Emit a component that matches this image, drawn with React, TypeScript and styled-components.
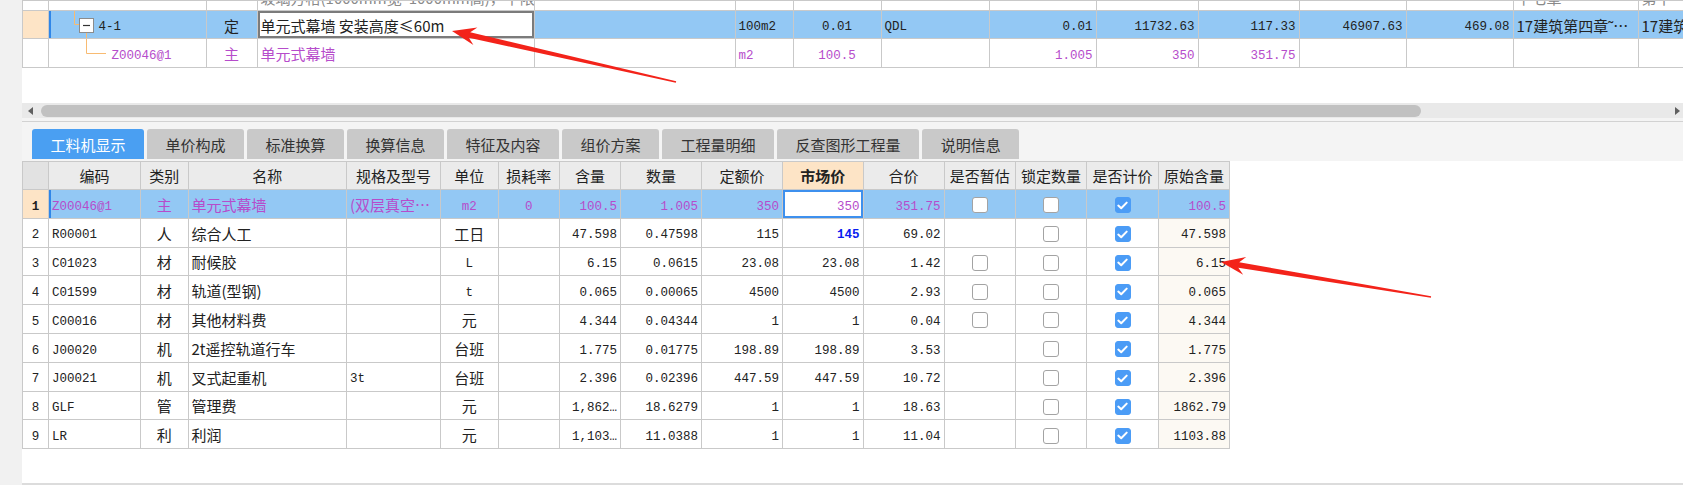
import React from 'react';
import styled, { createGlobalStyle } from 'styled-components';

const PURPLE = '#b64ccb';
const LINE = '#c9c9c9';
const SELECTED = '#93c8f4';
const PEACH = '#fde4c6';
const ORANGE = '#f8bb72';

const GlobalStyle = createGlobalStyle`
  html, body {
    margin: 0;
    padding: 0;
    background: #fff;
  }
  body {
    width: 1683px;
    height: 485px;
    overflow: hidden;
    font-family: "Noto Sans CJK SC", "Liberation Sans", sans-serif;
    color: #222;
  }
`;

const Page = styled.div`
  position: relative;
  display: flex;
  width: 1683px;
  height: 485px;
  overflow: hidden;
`;

const LeftStrip = styled.div`
  flex: none;
  width: 22px;
  background: #f1f1f1;
`;

const Main = styled.div`
  flex: 1;
  min-width: 0;
  display: flex;
  flex-direction: column;
  background: #f4f4f4;
`;

const TopPane = styled.div`
  height: 103px;
  background: #fff;
  overflow: hidden;
`;

const Grid = styled.table`
  border-collapse: collapse;
  table-layout: fixed;
`;

const Row = styled.tr<{ $h: number; $bg?: string }>`
  height: ${p => p.$h}px;
  background: ${p => p.$bg || 'transparent'};
`;

const Cell = styled.td<{
  $align?: string;
  $bg?: string;
  $color?: string;
  $bold?: boolean;
  $edit?: 'gray' | 'blue';
  $mark?: boolean;
}>`
  position: relative;
  border: 1px solid ${LINE};
  padding: 0 3px;
  white-space: nowrap;
  overflow: hidden;
  vertical-align: middle;
  line-height: 1;
  text-align: ${p => p.$align || 'left'};
  background: ${p => p.$bg || 'transparent'};
  color: ${p => p.$color || '#222'};
  font-weight: ${p => (p.$bold ? 700 : 400)};
  box-shadow: ${p =>
    p.$edit === 'gray'
      ? 'inset 0 0 0 2px #7b7b7b'
      : p.$edit === 'blue'
      ? 'inset 0 0 0 2px #3d90ee'
      : p.$mark
      ? `inset 2px 0 0 #2f86e8`
      : 'none'};
`;

const HeadCell = styled.th<{ $bg?: string; $bold?: boolean }>`
  border: 1px solid ${LINE};
  padding: 0;
  font-size: 15px;
  font-weight: ${p => (p.$bold ? 700 : 400)};
  color: #222;
  line-height: 1;
  text-align: center;
  white-space: nowrap;
  overflow: hidden;
  background: ${p => p.$bg || '#ebebeb'};
`;

const Txt = styled.span<{ $cjk?: boolean }>`
  font-family: ${p =>
    p.$cjk ? '"Noto Sans CJK SC", sans-serif' : '"Liberation Mono", "Noto Sans CJK SC", monospace'};
  font-size: ${p => (p.$cjk ? '15px' : '12.5px')};
`;

const GhostText = styled.div`
  margin-top: -16px;
  color: #8a8a8a;
  font-size: 15px;
  line-height: 20px;
`;

const Tree = styled.svg`
  position: absolute;
  left: 0;
  overflow: visible;
  pointer-events: none;
`;

const ScrollBar = styled.div`
  height: 15px;
  flex: none;
  display: flex;
  align-items: center;
  background: #e9e9e9;
  position: relative;
`;

const ArrowLeft = styled.span`
  width: 0;
  height: 0;
  margin-left: 6px;
  border-top: 4px solid transparent;
  border-bottom: 4px solid transparent;
  border-right: 5px solid #606060;
`;

const Thumb = styled.div`
  margin-left: 8px;
  width: 1380px;
  height: 12px;
  border-radius: 6px;
  background: #c1c1c1;
`;

const ArrowRight = styled.span`
  margin-left: auto;
  margin-right: 3px;
  width: 0;
  height: 0;
  border-top: 4px solid transparent;
  border-bottom: 4px solid transparent;
  border-left: 5px solid #606060;
`;

const TabBar = styled.div`
  flex: none;
  display: flex;
  gap: 3px;
  margin-top: 3px;
  border-top: 1px solid #d2d2d2;
  padding: 7px 0 2px 10px;
  background: #f4f4f4;
`;

const Tab = styled.div<{ $active?: boolean }>`
  height: 30px;
  padding: 0 18.5px;
  display: flex;
  align-items: center;
  border-radius: 3px 3px 0 0;
  font-size: 15px;
  background: ${p => (p.$active ? '#4a9ff2' : '#c9c9c9')};
  color: ${p => (p.$active ? '#fff' : '#333')};
`;

const LowerPane = styled.div`
  flex: 1;
  background: #fff;
  border-bottom: 2px solid #dcdcdc;
`;

const Box = styled.span<{ $checked?: boolean }>`
  display: inline-flex;
  align-items: center;
  justify-content: center;
  width: 16px;
  height: 16px;
  box-sizing: border-box;
  border-radius: 3px;
  vertical-align: middle;
  border: 1.5px solid ${p => (p.$checked ? '#4b9cf6' : '#a3a3a3')};
  background: ${p => (p.$checked ? '#4b9cf6' : '#fff')};
`;

const Overlay = styled.svg`
  position: absolute;
  left: 0;
  top: 0;
  pointer-events: none;
`;

const isCjk = (s: string) => /[\u3000-\u9fff\uff00-\uffef]/.test(s);

function T({ v }: { v: string }) {
  if (!v) return null;
  return <Txt $cjk={isCjk(v)}>{v}</Txt>;
}

function Check({ on }: { on?: boolean }) {
  return (
    <Box $checked={on}>
      {on && (
        <svg width="11" height="9" viewBox="0 0 11 9">
          <path d="M1.3 4.6 L4.2 7.3 L9.7 1.6" fill="none" stroke="#fff" strokeWidth="2" strokeLinecap="round" strokeLinejoin="round" />
        </svg>
      )}
    </Box>
  );
}

// top (清单) grid
const topCols = [25.5, 158, 51, 277, 201, 58, 88, 108, 107, 102, 101, 107, 107, 125, 100];

function TopGrid() {
  return (
    <Grid style={{ width: topCols.reduce((a, b) => a + b, 0) }}>
      <colgroup>
        {topCols.map((w, i) => (
          <col key={i} style={{ width: w }} />
        ))}
      </colgroup>
      <tbody>
        <Row $h={10}>
          <Cell />
          <Cell />
          <Cell />
          <Cell><GhostText>玻璃方格(1000mm宽*1000mm高)，下限值</GhostText></Cell>
          {Array.from({ length: 9 }).map((_, i) => <Cell key={i} />)}
          <Cell><GhostText>下七章</GhostText></Cell>
          <Cell><GhostText>第十</GhostText></Cell>
        </Row>
        <Row $h={28} $bg={SELECTED}>
          <Cell $bg={PEACH} />
          <Cell $mark style={{ paddingLeft: 50 }}>
            <Tree width="60" height="38" style={{ top: -10 }}>
              <path d="M25.5 0 V23.5 H30" stroke={ORANGE} strokeWidth="1" fill="none" />
              <path d="M37.5 31 V38" stroke={ORANGE} strokeWidth="1" fill="none" />
              <rect x="30.5" y="17.5" width="14" height="14" fill="#fff" stroke="#8c8c8c" />
              <path d="M34 24.5 H41" stroke="#333" strokeWidth="1.2" />
            </Tree>
            <T v="4-1" />
          </Cell>
          <Cell $align="center"><T v="定" /></Cell>
          <Cell $edit="gray" $bg="#fff"><T v="单元式幕墙 安装高度≤60m" /></Cell>
          <Cell />
          <Cell><T v="100m2" /></Cell>
          <Cell $align="center"><T v="0.01" /></Cell>
          <Cell><T v="QDL" /></Cell>
          <Cell $align="right"><T v="0.01" /></Cell>
          <Cell $align="right"><T v="11732.63" /></Cell>
          <Cell $align="right"><T v="117.33" /></Cell>
          <Cell $align="right"><T v="46907.63" /></Cell>
          <Cell $align="right"><T v="469.08" /></Cell>
          <Cell><T v="17建筑第四章˜…" /></Cell>
          <Cell><T v="17建筑第十七章" /></Cell>
        </Row>
        <Row $h={29}>
          <Cell />
          <Cell $color={PURPLE} style={{ paddingLeft: 63 }}>
            <Tree width="60" height="29" style={{ top: 0 }}>
              <path d="M37.5 0 V14.5 H57" stroke={ORANGE} strokeWidth="1" fill="none" />
            </Tree>
            <T v="Z00046@1" />
          </Cell>
          <Cell $align="center" $color={PURPLE}><T v="主" /></Cell>
          <Cell $color={PURPLE}><T v="单元式幕墙" /></Cell>
          <Cell />
          <Cell $color={PURPLE}><T v="m2" /></Cell>
          <Cell $align="center" $color={PURPLE}><T v="100.5" /></Cell>
          <Cell />
          <Cell $align="right" $color={PURPLE}><T v="1.005" /></Cell>
          <Cell $align="right" $color={PURPLE}><T v="350" /></Cell>
          <Cell $align="right" $color={PURPLE}><T v="351.75" /></Cell>
          <Cell />
          <Cell />
          <Cell />
          <Cell />
        </Row>
      </tbody>
    </Grid>
  );
}

// lower (工料机) grid
const cols = [26, 92, 47.5, 158.5, 94, 57.5, 61.5, 61, 81, 81, 80.5, 81, 71.5, 71, 72, 71];
const heads = ['', '编码', '类别', '名称', '规格及型号', '单位', '损耗率', '含量', '数量', '定额价', '市场价', '合价', '是否暂估', '锁定数量', '是否计价', '原始含量'];
const aligns = ['center', 'left', 'center', 'left', 'left', 'center', 'center', 'right', 'right', 'right', 'right', 'right', 'center', 'center', 'center', 'right'];

type Item = {
  code: string; kind: string; name: string; spec: string; unit: string; loss: string;
  qty: string; amount: string; base: string; market: string; total: string;
  est: boolean; orig: string;
};

const items: Item[] = [
  { code: 'Z00046@1', kind: '主', name: '单元式幕墙', spec: '(双层真空…', unit: 'm2', loss: '0', qty: '100.5', amount: '1.005', base: '350', market: '350', total: '351.75', est: true, orig: '100.5' },
  { code: 'R00001', kind: '人', name: '综合人工', spec: '', unit: '工日', loss: '', qty: '47.598', amount: '0.47598', base: '115', market: '145', total: '69.02', est: false, orig: '47.598' },
  { code: 'C01023', kind: '材', name: '耐候胶', spec: '', unit: 'L', loss: '', qty: '6.15', amount: '0.0615', base: '23.08', market: '23.08', total: '1.42', est: true, orig: '6.15' },
  { code: 'C01599', kind: '材', name: '轨道(型钢)', spec: '', unit: 't', loss: '', qty: '0.065', amount: '0.00065', base: '4500', market: '4500', total: '2.93', est: true, orig: '0.065' },
  { code: 'C00016', kind: '材', name: '其他材料费', spec: '', unit: '元', loss: '', qty: '4.344', amount: '0.04344', base: '1', market: '1', total: '0.04', est: true, orig: '4.344' },
  { code: 'J00020', kind: '机', name: '2t遥控轨道行车', spec: '', unit: '台班', loss: '', qty: '1.775', amount: '0.01775', base: '198.89', market: '198.89', total: '3.53', est: false, orig: '1.775' },
  { code: 'J00021', kind: '机', name: '叉式起重机', spec: '3t', unit: '台班', loss: '', qty: '2.396', amount: '0.02396', base: '447.59', market: '447.59', total: '10.72', est: false, orig: '2.396' },
  { code: 'GLF', kind: '管', name: '管理费', spec: '', unit: '元', loss: '', qty: '1,862…', amount: '18.6279', base: '1', market: '1', total: '18.63', est: false, orig: '1862.79' },
  { code: 'LR', kind: '利', name: '利润', spec: '', unit: '元', loss: '', qty: '1,103…', amount: '11.0388', base: '1', market: '1', total: '11.04', est: false, orig: '1103.88' },
];

const tabs = ['工料机显示', '单价构成', '标准换算', '换算信息', '特征及内容', '组价方案', '工程量明细', '反查图形工程量', '说明信息'];

function ResourceGrid() {
  return (
    <Grid style={{ width: cols.reduce((a, b) => a + b, 0) }}>
      <colgroup>
        {cols.map((w, i) => (
          <col key={i} style={{ width: w }} />
        ))}
      </colgroup>
      <thead>
        <Row $h={28}>
          {heads.map((h, i) => (
            <HeadCell key={i} $bg={i === 0 ? '#e2e2e2' : i === 10 ? PEACH : undefined} $bold={i === 10}>
              {h}
            </HeadCell>
          ))}
        </Row>
      </thead>
      <tbody>
        {items.map((it, r) => {
          const sel = r === 0;
          const color = sel ? PURPLE : undefined;
          const vals = [it.code, it.kind, it.name, it.spec, it.unit, it.loss, it.qty, it.amount, it.base, it.market, it.total];
          return (
            <Row key={r} $h={28.8} $bg={sel ? SELECTED : undefined}>
              <Cell $align="center" $bg={sel ? PEACH : undefined} $bold={sel}>
                <T v={String(r + 1)} />
              </Cell>
              {vals.map((v, c) => {
                const col = c + 1;
                const isMarket = col === 10;
                return (
                  <Cell
                    key={col}
                    $align={aligns[col]}
                    $color={r === 1 && isMarket ? '#0a1cf0' : color}
                    $bold={r === 1 && isMarket}
                    $mark={sel && col === 1}
                    $edit={sel && isMarket ? 'blue' : undefined}
                    $bg={sel && isMarket ? '#fff' : undefined}
                  >
                    <T v={v} />
                  </Cell>
                );
              })}
              <Cell $align="center">{it.est && <Check />}</Cell>
              <Cell $align="center"><Check /></Cell>
              <Cell $align="center"><Check on /></Cell>
              <Cell $align="right" $color={color} $bg={sel ? undefined : '#fcf9f3'}>
                <T v={it.orig} />
              </Cell>
            </Row>
          );
        })}
      </tbody>
    </Grid>
  );
}

function arrowPoints(tx: number, ty: number, sx: number, sy: number) {
  const len = Math.hypot(sx - tx, sy - ty);
  const dx = (sx - tx) / len;
  const dy = (sy - ty) / len;
  const nx = -dy;
  const ny = dx;
  const p = (a: number, b: number) => `${(tx + dx * a + nx * b).toFixed(1)},${(ty + dy * a + ny * b).toFixed(1)}`;
  return [
    p(0, 0),
    p(24, 9),
    p(18, 2.8),
    `${(sx + nx * 0.7).toFixed(1)},${(sy + ny * 0.7).toFixed(1)}`,
    `${(sx - nx * 0.7).toFixed(1)},${(sy - ny * 0.7).toFixed(1)}`,
    p(18, -2.8),
    p(24, -9),
  ].join(' ');
}

export default function App() {
  return (
    <Page>
      <GlobalStyle />
      <LeftStrip />
      <Main>
        <TopPane>
          <TopGrid />
        </TopPane>
        <ScrollBar>
          <ArrowLeft />
          <Thumb />
          <ArrowRight />
        </ScrollBar>
        <TabBar>
          {tabs.map((t, i) => (
            <Tab key={t} $active={i === 0}>{t}</Tab>
          ))}
        </TabBar>
        <LowerPane>
          <ResourceGrid />
        </LowerPane>
      </Main>
      <Overlay width="1683" height="485">
        <polygon points={arrowPoints(452, 31, 676, 82)} fill="#f3231a" />
        <polygon points={arrowPoints(1221, 262, 1431, 297)} fill="#f3231a" />
      </Overlay>
    </Page>
  );
}
